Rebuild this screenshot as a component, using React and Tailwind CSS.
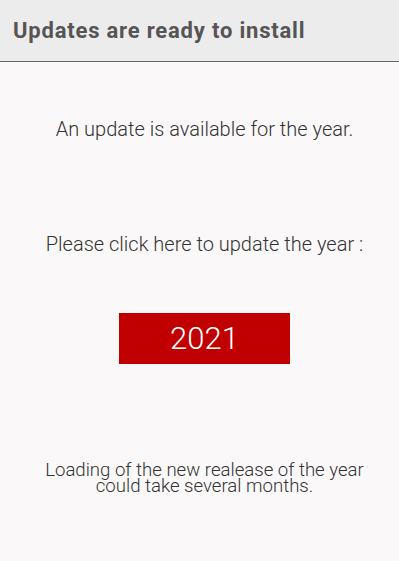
export default function App() {
  return (
    <div className="min-h-[561px] w-full bg-[#faf8f8] flex flex-col" style={{ fontFamily: "Roboto, 'Noto Sans', sans-serif" }}>
      <div className="h-[62px] bg-[#ececec] border-b border-[#666666] flex items-center px-[13px] shrink-0">
        <h1 className="text-[22px] font-bold tracking-[0.8px] text-[#555555] leading-none">Updates are ready to install</h1>
      </div>
      <div className="flex flex-col items-center pl-[10px] text-[#333333] font-light">
        <p className="mt-[55px] text-[20px] leading-[24px]">An update is available for the year.</p>
        <p className="mt-[91px] text-[20px] leading-[24px]">Please click here to update the year :</p>
        <button className="mt-[57px] w-[171px] h-[51px] bg-[#c00000] text-white text-[31px] font-light leading-none">2021</button>
        <p className="mt-[98px] text-[18.6px] leading-[16px] text-center">Loading of the new realease of the year<br />could take several months.</p>
      </div>
    </div>
  );
}
